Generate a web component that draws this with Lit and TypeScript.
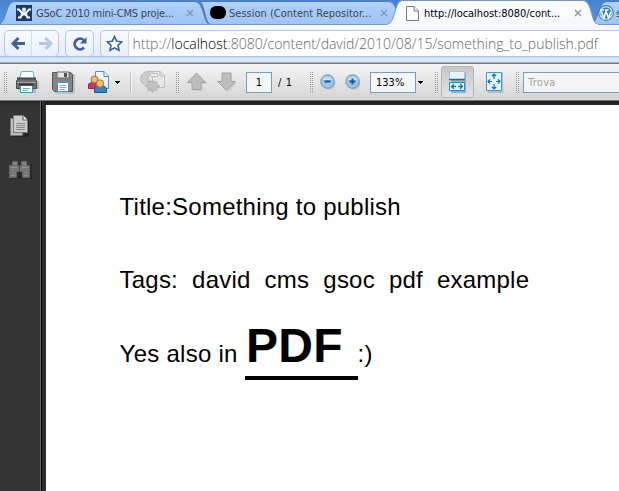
import { LitElement, html, svg, css } from "lit";
import { customElement } from "lit/decorators.js";

const grip = html`<i class="grip"></i>`;
const caret = html`<svg class="caret" width="6" height="3" shape-rendering="crispEdges"><path d="M0 0H5V1H4V2H3V3H2V2H1V1H0Z" fill="#000"/></svg>`;
const close = html`<svg class="close" width="8" height="8"><path d="M1 1L7 7M7 1L1 7" stroke="#8298b5" stroke-width="1.5"/></svg>`;

@customElement("browser-tabs")
export class BrowserTabs extends LitElement {
  static styles = css`
    :host { display: block; position: relative; height: 25px; overflow: hidden; background: #4a88d6; }
    .shapes { position: absolute; left: 0; top: 0; }
    .row { position: relative; display: flex; height: 25px; align-items: center; font: 11px "DejaVu Sans Condensed", "DejaVu Sans", sans-serif; font-stretch: condensed; color: #3b4450; white-space: nowrap; }
    .tab { display: flex; align-items: center; flex: none; height: 25px; box-sizing: border-box; padding-top: 1px; }
    .one { width: 194px; padding-left: 16px; }
    .two { width: 194px; padding-left: 16px; }
    .three { width: 194px; padding-left: 18px; color: #000; }
    .four { padding-left: 16px; }
    .tab svg { flex: none; }
    .label { display: block; flex: none; overflow: hidden; }
    .one .label { margin-left: 4px; width: 150px; letter-spacing: -0.18px; }
    .two .label { margin-left: 3px; width: 151px; letter-spacing: 0; }
    .three .label { margin-left: 5px; width: 150px; letter-spacing: -0.05px; }
    .four .label { margin-left: 2px; }
    .three .close { filter: grayscale(1); }
  `;
  render() {
    return html`
      <svg class="shapes" width="619" height="25">
        <defs>
          <linearGradient id="back" x2="0" y2="1"><stop stop-color="#4583d0"/><stop offset="1" stop-color="#5996df"/></linearGradient>
          <linearGradient id="idle" x2="0" y2="1"><stop stop-color="#b0d1fa"/><stop offset="1" stop-color="#9dc4f5"/></linearGradient>
          <linearGradient id="live" x2="0" y2="1"><stop stop-color="#fff"/><stop offset="1" stop-color="#f5f8ff"/></linearGradient>
        </defs>
        <rect width="619" height="25" fill="url(#back)"/>
        <g fill="url(#idle)" stroke="#5478aa">
          <path d="M-3 25C7 24 5 2 14 1.500H195C205 2 202 24 211 25Z"/>
          <path d="M589 25C599 24 597 2 607 1.500H640V25Z"/>
          <path d="M199.500 1.500H389C399 2 396 24 405 25H211C204 23 205 3 199.500 1.500Z"/>
        </g>
        <path d="M0 24.500H619" stroke="#789bc9"/>
        <path d="M386 25C396 24 394 1 402 .500H583C593 1 590 24 599 25Z" fill="url(#live)" stroke="#7795bc"/>
        <path d="M388 25H598" stroke="#f8faff" stroke-width="2"/>
      </svg>
      <div class="row">
        <div class="tab one">
          <svg width="16" height="16"><rect width="16" height="16" fill="#173b70"/><path d="M1 4.500H3L5.500 7.500H10.500L13 4.500H15M2 12.500H4.500L6 9.500H10L11.500 12.500H14" fill="none" stroke="#fff" stroke-width="2"/><circle cx="8" cy="4.500" r="2" fill="#fff"/></svg>
          <span class="label">GSoC 2010 mini-CMS proje...</span>${close}
        </div>
        <div class="tab two">
          <svg width="16" height="14"><rect width="16" height="13" rx="6" fill="#000"/></svg>
          <span class="label">Session (Content Repositor...</span>${close}
        </div>
        <div class="tab three">
          <svg width="13" height="15"><path d="M.500 .500H8L12.500 5V14.500H.500Z" fill="#fff" stroke="#777"/><path d="M8 .500V5H12.500" fill="#eee" stroke="#777"/></svg>
          <span class="label">http://localhost:8080/cont...</span>${close}
        </div>
        <div class="tab four">
          <svg width="16" height="16"><circle cx="8" cy="8" r="7.300" fill="#f4f9fd" stroke="#3984b3" stroke-width="1.200"/><circle cx="8" cy="8" r="5.700" fill="#3180b2"/><path d="M2.600 5L5.800 13L8 6.500L10.500 13L13 6.500M2 5H6M7 5H10.500" fill="none" stroke="#fff" stroke-width="1.500"/></svg>
          <span class="label">s</span>
        </div>
      </div>`;
  }
}

@customElement("address-bar")
export class AddressBar extends LitElement {
  static styles = css`
    :host { display: flex; height: 39px; box-sizing: border-box; padding: 5px 0 7px 4px; background: linear-gradient(#f7f9ff, #e7effd 75%, #dce9fc 31px, #abc2e6 31px, #abc2e6 32px, #d7e6fc 33px, #d4e3fa 37px, #77777c 38px); }
    .btn { box-sizing: border-box; height: 27px; border: 1px solid #b5c6e3; border-radius: 5px; background: linear-gradient(#f8faff, #e9f0fd); display: flex; align-items: center; flex: none; }
    .nav { width: 55px; }
    .half { width: 27px; height: 25px; display: flex; align-items: center; justify-content: center; box-sizing: border-box; }
    .half + .half { border-left: 1px solid #d2ddf0; }
    .reload { width: 29px; margin-left: 6px; justify-content: center; }
    .star { width: 29px; margin-left: 6px; border-radius: 5px 0 0 5px; border-right: 1px solid #c9d6ec; justify-content: center; }
    .url { flex: 1; box-sizing: border-box; height: 27px; background: #fff; border: solid #b5c6e3; border-width: 1px 0; padding-left: 3.5px; line-height: 25px; font-family: "Open Sans", sans-serif; font-size: 14px; font-weight: 300; letter-spacing: -0.01px; color: #666; white-space: nowrap; overflow: hidden; }
    .host { color: #000; }
  `;
  render() {
    return html`
      <div class="btn nav">
        <span class="half"><svg width="15" height="13"><path d="M14 6.500H3M7.500 1L2 6.500L7.500 12" fill="none" stroke="#3f5f96" stroke-width="3"/></svg></span>
        <span class="half"><svg width="15" height="13"><path d="M1 6.500H12M7.500 1L13 6.500L7.500 12" fill="none" stroke="#b3c7e6" stroke-width="3"/></svg></span>
      </div>
      <div class="btn reload"><svg width="16" height="16"><path d="M12 11.500A5.300 5.300 0 1 1 11.500 4" fill="none" stroke="#3f5f96" stroke-width="2.800"/><path d="M14.500 1V7.500H8Z" fill="#3f5f96"/></svg></div>
      <div class="btn star"><svg width="17" height="17"><path d="M8.500 1.500L10.700 6.200L15.700 6.800L12 10.300L13 15.300L8.500 12.800L4 15.300L5 10.300L1.300 6.800L6.300 6.200Z" fill="#fff" stroke="#3f5f96" stroke-width="1.600"/></svg></div>
      <div class="url">http://<span class="host">localhost</span>:8080/content/david/2010/08/15/something_to_publish.pdf</div>`;
  }
}

const zoomIcon = (plus: boolean) => html`<svg class="${plus ? "plus" : "minus"}" width="16" height="16">
  <circle cx="8.500" cy="9" r="6.800" fill="#bbb"/><circle cx="7.500" cy="7.500" r="6.700" fill="#9bc8e8" stroke="#7792aa"/>
  <path d="M2.500 6A5.500 5 0 0 1 12.500 6Z" fill="#c8e2f4"/>
  <path d="M4.500 7.500H10.500" stroke="#175993" stroke-width="2"/>${plus ? svg`<path d="M7.500 4.500V10.500" stroke="#175993" stroke-width="2"/>` : ""}</svg>`;

@customElement("reader-toolbar")
export class ReaderToolbar extends LitElement {
  static styles = css`
    :host { display: flex; align-items: center; height: 36px; box-sizing: border-box; overflow: hidden; background: linear-gradient(#f3f3f3, #e9e9e9 35%, #d5d5d5); font: 12px "DejaVu Sans Condensed", "DejaVu Sans", sans-serif; font-stretch: condensed; }
    svg, i, span { flex: none; }
    .grip { width: 4px; height: 21px; background: conic-gradient(#999 25%, transparent 0 75%, transparent 0) 0 0 / 2px 2px; }
    .grip:first-of-type { margin-left: 3px; }
    .printer { margin-left: 9px; }
    .disk { margin-left: 13px; }
    .people { margin-left: 13px; }
    .caret { margin-left: 4px; }
    .rule { width: 1px; height: 21px; background: #bfc3b4; border-right: 1px solid #f5f5f0; margin-left: 9px; }
    .share { margin-left: 8px; }
    .share + .grip { margin-left: 8px; }
    .up { margin-left: 8px; }
    .down { margin-left: 9px; }
    .box { box-sizing: border-box; height: 21px; border: 1px solid #7d9cbb; background: #f5f5f5; line-height: 19px; }
    .page { width: 26px; margin-left: 9px; text-align: center; font-size: 11px; }
    .total { margin-left: 6px; width: 18px; white-space: pre; font-size: 11px; letter-spacing: 0.6px; }
    .total + .grip { margin-left: 13px; }
    .minus { margin-left: 7px; }
    .plus { margin-left: 9px; }
    .zoom { width: 46px; margin-left: 9px; padding-left: 5px; font-size: 11px; }
    .zoom + .caret { margin-left: 2px; }
    .caret + .grip { margin-left: 10px; }
    .chosen { display: flex; align-items: center; justify-content: center; box-sizing: border-box; width: 33px; height: 32px; margin-left: 3px; border: 1px solid #b5b5b5; border-radius: 3px; background: linear-gradient(#c7c7c7, #e3e3e3); }
    .fit { margin-left: 12px; }
    .fit + .grip { margin-left: 12px; }
    .find { width: 110px; margin-left: 4px; padding-left: 4px; color: #a5a594; font-size: 11px; letter-spacing: 0.3px; }
  `;
  render() {
    return html`
      ${grip}
      <svg class="printer" width="23" height="24">
        <path d="M2 11H23V19H20V23H6V20H2Z" fill="#bbb"/>
        <path d="M.500 11L3 7.500H18L20.500 11V18.500H.500Z" fill="#707070" stroke="#4c4c4c"/><path d="M1 12.500H20" stroke="#a5a5a5"/>
        <path d="M5.500 1.500H17L18 8.500H3.500Z" fill="#f8fcfe" stroke="#61b5d4"/><path d="M1 8.500H20" stroke="#494949" stroke-width="2"/>
        <path d="M4.500 15.500H16.500V22.500H4.500Z" fill="#fff" stroke="#438eb1"/><path d="M3 14.500H18" stroke="#333" stroke-width="2"/><path d="M7 18.500H14M7 20.500H12" stroke="#75a8c5"/>
      </svg>
      <svg class="disk" width="23" height="23">
        <path d="M3 3H23V23H3Z" fill="#c4c4c4"/><path d="M.500 1.500H18.500L20.500 3.500V20.500H2.500L.500 18.500Z" fill="#858585" stroke="#555"/>
        <path d="M5 1H17V7H5Z" fill="#e6e6e6" stroke="#666"/><path d="M12 2H15V6H12Z" fill="#555"/>
        <path d="M5.500 11.500H16.500V20.500H5.500Z" fill="#fff" stroke="#3a99c8"/><path d="M7.500 14.500H14M7.500 16.500H14M7.500 18.500H13" stroke="#8caabd"/>
      </svg>
      <svg class="people" width="23" height="24">
        <path d="M7.500 1.500H16L20.500 6V18.500H7.500Z" fill="#edf7fd" stroke="#4793c4"/><path d="M16 1.500V6.500H20.500" fill="#fff" stroke="#3b83b4"/>
        <path d="M.500 18.500V14L4 12H10V18.500Z" fill="#cc365f" stroke="#962747"/><circle cx="6.500" cy="9.500" r="3.500" fill="#f6ba70" stroke="#a8682d"/>
        <path d="M6.500 22.500V18L9 16H16L18.500 18V22.500Z" fill="#3285bd" stroke="#195a8c"/><circle cx="12" cy="13.500" r="3.700" fill="#f8be78" stroke="#a8682d"/>
      </svg>
      ${caret}<i class="rule"></i>
      <svg class="share" width="27" height="24">
        <path d="M12.500 1.500H20L24.500 5.500V17.500H12.500Z" fill="#e8e8e8" stroke="#bbb"/><path d="M20 1.500V6H24.500" fill="none" stroke="#bbb"/>
        <path d="M17 4.500H10.500Q7 6 9 11L12 12L7 16.500L2 13Q-1 9 1.500 5Q4 1.500 9 1.500H12" fill="#cbcbcb" stroke="#b8b8b8"/><path d="M9.500 3.500H17.500V6.500H11Z" fill="#f0f0f0" stroke="#bcbcbc"/>
        <path d="M12.500 10L14.200 12.500L17 11.500L16.800 14.500L19.500 16L16.800 17.500L17 20.500L14.200 19.500L12.500 22.500L10.800 19.500L8 20.500L8.200 17.500L5.500 16L8.200 14.500L8 11.500L10.800 12.500Z" fill="#c2c2c2" stroke="#b2b2b2"/>
      </svg>
      ${grip}
      <svg class="up" width="21" height="20"><path d="M11 2L20.500 12H16V19H7V12Z" fill="#d0d0d0"/><path d="M9.500 1L18.500 10.500H14V17.500H5V10.500H.500Z" fill="#bdbdbd" stroke="#a3a3a3"/></svg>
      <svg class="down" width="20" height="20"><path d="M7 3H15V11H20L11 20Z" fill="#d0d0d0"/><path d="M5 1H14V9.500H18.500L9.500 18.500L.500 9.500H5Z" fill="#bdbdbd" stroke="#a3a3a3"/></svg>
      <span class="box page">1</span><span class="total">/ 1</span>
      ${grip}${zoomIcon(false)}${zoomIcon(true)}
      <span class="box zoom">133%</span>${caret}${grip}
      <span class="chosen"><svg width="17" height="22">
        <path d="M2 1H17V22H2Z" fill="#aaa"/><path d="M.500 .500H15.500V8.500H.500Z" fill="#e6f3fa" stroke="#9ccae5"/><path d="M0 8.500H16" stroke="#1772ab" stroke-width="1.500"/>
        <path d="M.500 11.500H15.500V19.500H.500Z" fill="#f1f9fd" stroke="#2787c1"/><path d="M2.500 15.500H7M9 15.500H13.500M5 13L2.500 15.500L5 18M11 13L13.500 15.500L11 18" fill="none" stroke="#1675b0" stroke-width="1.300"/></svg></span>
      <svg class="fit" width="17" height="22"><path d="M2 2H17V22H2Z" fill="#bbb"/><path d="M.500 1.500H15.500V19.500H.500Z" fill="#e6f4fc" stroke="#3e98cd"/>
        <path d="M8 3V8M8 13V18M2 10.500H6M10 10.500H14M5.800 5.200L8 3L10.200 5.200M5.800 15.800L8 18L10.200 15.800M4 8.500L2 10.500L4 12.500M12 8.500L14 10.500L12 12.500" fill="none" stroke="#1d70a7" stroke-width="1.200"/></svg>
      ${grip}<span class="box find">Trova</span>`;
  }
}

@customElement("app-root")
export class AppRoot extends LitElement {
  static styles = css`
    :host { display: flex; flex-direction: column; width: 619px; height: 491px; overflow: hidden; background: #333; }
    browser-tabs, address-bar, reader-toolbar { flex: none; }
    .main { flex: 1; display: flex; border-top: 1px solid #777; background: linear-gradient(#1f1f1f, #292929 4px, #333 5px); }
    .side { width: 41px; box-sizing: border-box; padding: 13px 0 0 9px; display: flex; flex-direction: column; gap: 22px; background: linear-gradient(#222, #343434 5px); border-right: 1px solid #686868; }
    .gutter { width: 4px; border-left: 1px solid #000; box-sizing: border-box; background: #2b2b2b; }
    .paper { flex: 1; margin: 4px 0 0 1px; background: #fff; color: #000; font: 24px/28px "Liberation Sans", Arial, sans-serif; padding: 88px 0 0 73.6px; white-space: pre; }
    p { margin: 0; height: 28px; }
    .title { letter-spacing: 0.23px; }
    .tags { margin-top: 45px; letter-spacing: 0.2px; word-spacing: 0.2px; }
    .also { margin-top: 25px; height: 60px; display: flex; align-items: baseline; letter-spacing: 0.26px; }
    .big { font-size: 48px; line-height: 54px; font-weight: bold; width: 113px; box-sizing: border-box; height: 61px; border-bottom: 4px solid #000; letter-spacing: 0.2px; text-indent: 1.5px; }
  `;
  render() {
    return html`
      <browser-tabs></browser-tabs>
      <address-bar></address-bar>
      <reader-toolbar></reader-toolbar>
      <div class="main">
        <div class="side">
          <svg width="21" height="24"><path d="M3 5H20V23H3Z" fill="#242424"/><path d="M1.500 4.500H13.500V21.500H1.500Z" fill="#bdbdbd" stroke="#777"/><path d="M4.500 1.500H14L18.500 6V18.500H4.500Z" fill="#ccc" stroke="#7b7b7b"/><path d="M14 1.500V6H18.500" fill="#eee" stroke="#555"/><path d="M7 9.500H16M7 11.500H16M7 13.500H16M7 15.500H16" stroke="#888"/></svg>
          <svg width="24" height="20"><path d="M3 4H23V19H3Z" fill="#292929"/><path d="M3.500 1.500H8.500V5.500H10V11.500H7.500V17.500H.500V5.500H3.500ZM12.500 1.500H17.500V5.500H20.500V17.500H13.500V11.500H11V5.500H12.500Z" fill="#777" stroke="#646464"/><path d="M4 3.500H8M13 3.500H17M2 7.500H8M13 7.500H19M2 15.500H6M15 15.500H19" stroke="#929292"/></svg>
        </div>
        <div class="gutter"></div>
        <div class="paper"><p class="title">Title:Something to publish</p><p class="tags">Tags:  david  cms  gsoc  pdf  example</p><p class="also"><span>Yes also in </span><span class="big">PDF</span><span>:)</span></p></div>
      </div>`;
  }
}
